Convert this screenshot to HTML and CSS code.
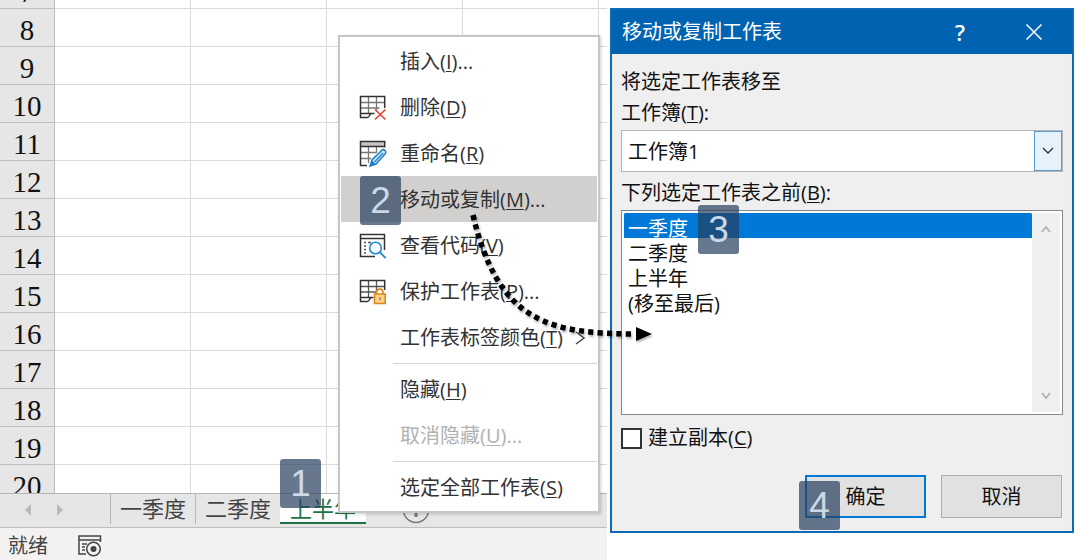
FILE: index.html
```html
<!DOCTYPE html>
<html lang="zh-CN">
<head>
    <meta charset="UTF-8">
    <meta name="viewport" content="width=device-width, initial-scale=1.0">
    <title>移动或复制工作表</title>
    <link rel="stylesheet" href="styles.css">
</head>
<body>
<div class="page">

    <!-- Workbook window -->
    <section class="workbook">
        <div class="sheet">
            <table class="grid">
                <colgroup>
                    <col class="col-head"><col class="col"><col class="col"><col class="col"><col class="col"><col>
                </colgroup>
                <tbody>
                    <tr><th>7</th><td></td><td></td><td></td><td></td><td></td></tr>
                    <tr><th>8</th><td></td><td></td><td></td><td></td><td></td></tr>
                    <tr><th>9</th><td></td><td></td><td></td><td></td><td></td></tr>
                    <tr><th>10</th><td></td><td></td><td></td><td></td><td></td></tr>
                    <tr><th>11</th><td></td><td></td><td></td><td></td><td></td></tr>
                    <tr><th>12</th><td></td><td></td><td></td><td></td><td></td></tr>
                    <tr><th>13</th><td></td><td></td><td></td><td></td><td></td></tr>
                    <tr><th>14</th><td></td><td></td><td></td><td></td><td></td></tr>
                    <tr><th>15</th><td></td><td></td><td></td><td></td><td></td></tr>
                    <tr><th>16</th><td></td><td></td><td></td><td></td><td></td></tr>
                    <tr><th>17</th><td></td><td></td><td></td><td></td><td></td></tr>
                    <tr><th>18</th><td></td><td></td><td></td><td></td><td></td></tr>
                    <tr><th>19</th><td></td><td></td><td></td><td></td><td></td></tr>
                    <tr><th>20</th><td></td><td></td><td></td><td></td><td></td></tr>
                </tbody>
            </table>
        </div>

        <nav class="tab-bar">
            <div class="tab-nav">
                <button type="button" aria-label="上一个"><svg width="8" height="14" viewBox="0 0 8 14"><path d="M7 1v12L1 7z" fill="#b9b9b9"/></svg></button>
                <button type="button" aria-label="下一个"><svg width="8" height="14" viewBox="0 0 8 14"><path d="M1 1v12l6-6z" fill="#b9b9b9"/></svg></button>
            </div>
            <a class="tab" href="#q1">一季度</a>
            <a class="tab" href="#q2">二季度</a>
            <a class="tab active" href="#h1">上半年<span class="badge badge-tab">1</span></a>
            <button class="add-sheet" type="button" aria-label="新工作表">
                <svg width="28" height="28" viewBox="0 0 28 28" fill="none" stroke="#777"><circle cx="14" cy="14" r="12.500" stroke-width="1.500"/><path d="M14 7v14M7 14h14" stroke-width="3"/></svg>
            </button>
        </nav>

        <footer class="status-bar">
            <span>就绪</span>
            <svg width="24" height="22" viewBox="0 0 24 22" fill="none" stroke="#444" stroke-width="1.500">
                <path d="M22.500 7V1H1v18h7M1 5h21M4 9h5M4 12h3M4 15h3"/>
                <circle cx="15.500" cy="14" r="6.800"/>
                <circle cx="15.500" cy="14" r="3" fill="#444" stroke="none"/>
            </svg>
        </footer>

        <!-- Sheet tab context menu -->
        <div class="menu" role="menu">
            <button class="item" role="menuitem" type="button"><span class="icon"></span><span>插入(<u>I</u>)...</span></button>
            <button class="item" role="menuitem" type="button">
                <span class="icon"><svg width="28" height="26" viewBox="0 0 28 26" fill="none">
                    <path d="M1.500 7.500h24M1.500 13h19M9.500 2v17M17.500 2v13" stroke="#777" stroke-width="1.300"/>
                    <path d="M25.700 13V1.500H1.500v21h7c2 0 2-4 4-4h3M1.500 18.500h13" stroke="#333" stroke-width="1.500"/>
                    <path d="M16 14.500l10.500 10M26.500 14.500l-10.500 10" stroke="#e0443a" stroke-width="1.700"/>
                </svg></span><span>删除(<u>D</u>)</span>
            </button>
            <button class="item" role="menuitem" type="button">
                <span class="icon"><svg width="28" height="28" viewBox="0 0 28 28" fill="none">
                    <path d="M2 2h23v4H2z" fill="#c8c6c4"/>
                    <path d="M2 12.500h15M2 18.500h10M9.500 7v16M17.500 7v6" stroke="#777" stroke-width="1.300"/>
                    <path d="M25.700 7.500V1.500H1.500v24H8M1.500 6.500h24" stroke="#333" stroke-width="1.500"/>
                    <path d="M11 26l2-6L22.500 10.500c1-1 2.500-1 3.500 0s1 2.500 0 3.500L17 24z" fill="#cfe6f8" stroke="#1e7fc9" stroke-width="1.500"/>
                    <path d="M11 26l2-5.500 3.500 3.500z" fill="#1e7fc9"/>
                    <path d="M15.500 22L24 13" stroke="#1e7fc9" stroke-width="1.200"/>
                </svg></span><span>重命名(<u>R</u>)</span>
            </button>
            <button class="item selected" role="menuitem" type="button"><span class="icon"></span><span>移动或复制(<u>M</u>)...</span><span class="badge badge-item">2</span></button>
            <button class="item" role="menuitem" type="button">
                <span class="icon"><svg width="28" height="26" viewBox="0 0 28 26" fill="none">
                    <path d="M16 23.500H1.500v-22h24V17M1.500 5.500h24" stroke="#333" stroke-width="1.500"/>
                    <path d="M5 9.500h2M9 9.500h3M5 13h2M5 16.500h2M5 20h2" stroke="#555" stroke-width="1.400"/>
                    <circle cx="16.500" cy="15" r="5.800" fill="#fff" stroke="#1e88d2" stroke-width="1.600"/>
                    <path d="M20.700 19.200l6 6" stroke="#1e88d2" stroke-width="1.800"/>
                </svg></span><span>查看代码(<u>V</u>)</span>
            </button>
            <button class="item" role="menuitem" type="button">
                <span class="icon"><svg width="28" height="26" viewBox="0 0 28 26" fill="none">
                    <path d="M1.500 7.500h24M1.500 13h16M9.500 2v17M17.500 2v10" stroke="#555" stroke-width="1.300"/>
                    <path d="M25.700 11V1.500H1.500v21h7c2 0 2-4 4-4h2M1.500 18.500h12" stroke="#333" stroke-width="1.500"/>
                    <path d="M17.500 15v-1.500c0-4.500 6.500-4.500 6.500 0V15" stroke="#d9851a" stroke-width="1.600"/>
                    <path d="M15.500 15h10.700v9.500H15.500z" fill="#fbd28b" stroke="#d9851a" stroke-width="1.500"/>
                    <path d="M20.800 18.500v2.500" stroke="#b86a10" stroke-width="1.400"/>
                </svg></span><span>保护工作表(<u>P</u>)...</span>
            </button>
            <button class="item" role="menuitem" type="button"><span class="icon"></span><span>工作表标签颜色(<u>T</u>)</span>
                <svg class="submenu" width="10" height="14" viewBox="0 0 10 14" fill="none"><path d="M1 1l8 6-8 6" stroke="#444" stroke-width="1.500"/></svg>
            </button>
            <hr>
            <button class="item" role="menuitem" type="button"><span class="icon"></span><span>隐藏(<u>H</u>)</span></button>
            <button class="item" role="menuitem" type="button" disabled><span class="icon"></span><span>取消隐藏(<u>U</u>)...</span></button>
            <hr>
            <button class="item" role="menuitem" type="button"><span class="icon"></span><span>选定全部工作表(<u>S</u>)</span></button>
        </div>
    </section>

    <!-- Move or copy dialog -->
    <section class="dialog-area">
        <form class="dialog">
            <header class="title-bar">
                <h1>移动或复制工作表</h1>
                <button class="help" type="button">?</button>
                <button type="button" aria-label="关闭"><svg width="18" height="18" viewBox="0 0 18 18"><path d="M1.500 1.500l15 15M16.500 1.500l-15 15" stroke="#fff" stroke-width="1.500"/></svg></button>
            </header>
            <div class="dialog-body">
                <p>将选定工作表移至</p>
                <label for="book">工作簿(<u>T</u>):</label>
                <div class="combo">
                    <select id="book"><option>工作簿1</option></select>
                    <span class="combo-arrow"><svg width="12" height="8" viewBox="0 0 12 8" fill="none"><path d="M1 1l5 5 5-5" stroke="#333" stroke-width="1.400"/></svg></span>
                </div>
                <label for="before">下列选定工作表之前(<u>B</u>):</label>
                <div class="list">
                    <select id="before" size="8">
                        <option selected>一季度</option>
                        <option>二季度</option>
                        <option>上半年</option>
                        <option>(移至最后)</option>
                    </select>
                    <div class="scrollbar">
                        <svg width="10" height="8" viewBox="0 0 10 8" fill="none"><path d="M1 7l4-5 4 5" stroke="#b5b5b5" stroke-width="2"/></svg>
                        <svg width="10" height="8" viewBox="0 0 10 8" fill="none"><path d="M1 1l4 5 4-5" stroke="#b5b5b5" stroke-width="2"/></svg>
                    </div>
                    <span class="badge badge-list">3</span>
                </div>
                <div class="check">
                    <input type="checkbox" id="copy">
                    <label for="copy">建立副本(<u>C</u>)</label>
                </div>
                <div class="actions">
                    <button class="btn primary" type="button">确定<span class="badge badge-ok">4</span></button>
                    <button class="btn" type="button">取消</button>
                </div>
            </div>
        </form>
    </section>

    <!-- Dotted arrow from the menu item to the dialog -->
    <svg class="arrow" width="200" height="150" viewBox="0 0 200 150" fill="none">
        <path d="M13 15C24 62 42 98 72 115C98 131 135 134 175 134" stroke="#000" stroke-width="5.500" stroke-dasharray="5.200 4.200"/>
        <path d="M176 127l16 7-16 7z" fill="#000"/>
    </svg>
</div>
</body>
</html>
```
FILE: styles.css
```css
* {
    box-sizing: border-box;
}
body {
    margin: 0;
    background-color: #fff;
    color: #1a1a1a;
    font-family: "Open Sans", "Noto Sans CJK SC", sans-serif;
    font-size: 20px;
    line-height: 26px;
}
button, select, input {
    font: inherit;
    color: inherit;
    margin: 0;
}
button {
    background: none;
    border: 0;
    padding: 0;
}
svg {
    display: block;
    flex: none;
}
u {
    text-underline-offset: 2px;
    text-decoration-thickness: 1px;
}
.page {
    position: relative;
    display: grid;
    grid-template-columns: 607fr 473fr;
    height: 100vh;
}

/* Workbook */
.workbook {
    position: relative;
    display: flex;
    flex-direction: column;
    min-height: 0;
}
.sheet {
    flex: 1;
    min-height: 0;
    overflow: hidden;
}
.grid {
    width: 100%;
    margin-top: -29px; /* scrolled part way into row 7 */
    table-layout: fixed;
    border-collapse: separate;
    border-spacing: 0;
}
.col-head { width: 55px; }
.col { width: 136px; }
.grid th, .grid td {
    height: 38px;
    padding: 0;
    border-right: 1px solid #dadada;
    border-bottom: 1px solid #dadada;
}
.grid th {
    padding-top: 5px;
    background-color: #e6e6e6;
    border-color: #bdbdbd;
    color: #111;
    font-family: "Liberation Serif", serif;
    font-size: 29px;
    font-weight: normal;
    line-height: 32px;
}
.grid td:last-child { border-right: 0; }

.tab-bar {
    display: flex;
    align-items: flex-start;
    height: 35px;
    background-color: #e6e6e6;
    border-top: 1px solid #b5b5b5;
    border-bottom: 1px solid #bdbdbd;
}
.tab-nav {
    display: flex;
    gap: 24px;
    width: 110px;
    padding: 9px 0 0 24px;
}
.tab {
    position: relative;
    height: 30px;
    padding: 0 9px;
    border-left: 1px solid #b5b5b5;
    color: #444;
    font-size: 22px;
    line-height: 28px;
    text-decoration: none;
}
.tab.active {
    padding: 0 10px;
    background-color: #fff;
    border-left: 0;
    border-bottom: 2px solid #217346;
    color: #217346;
}
.add-sheet {
    margin: 2px 0 0 36px;
}
.status-bar {
    display: flex;
    align-items: center;
    gap: 30px;
    height: 32px;
    padding: 3px 8px 0;
    background-color: #f3f2f1;
    color: #444;
}

/* Context menu */
.menu {
    position: absolute;
    top: 35px;
    left: 338px;
    z-index: 1;
    width: 262px;
    padding: 1px;
    background-color: #fff;
    border: 2px solid #c6c6c6;
    box-shadow: 1px 1px 3px rgba(0,0,0,0.2);
    color: #333;
}
.item {
    position: relative;
    display: flex;
    align-items: center;
    width: 100%;
    height: 46px;
    padding: 2px 12px 0 18px;
    text-align: left;
    white-space: nowrap;
}
.item.selected { background-color: #d2d0ce; }
.item:disabled { color: #b1b1b1; }
.icon {
    width: 41px;
}
.submenu { margin-left: auto; }
.menu hr {
    height: 6px;
    margin: 0 0 0 52px;
    border: 0;
    background: linear-gradient(#d4d4d4, #d4d4d4) center / 100% 1px no-repeat;
}

/* Dialog */
.dialog-area {
    padding: 8px 6px 27px 3px;
}
.dialog {
    height: 100%;
    background-color: #f0eff0;
    border: 2px solid #0f6ab8;
    color: #111;
}
.title-bar {
    display: flex;
    align-items: center;
    gap: 60px;
    height: 44px;
    padding: 0 29px 0 10px;
    background-color: #0063b1;
    color: #fff;
}
.title-bar h1 {
    flex: 1;
    margin: 0;
    font-size: 20px;
    font-weight: normal;
}
.help {
    font-size: 22px;
    font-weight: 600;
}
.dialog-body {
    display: flex;
    flex-direction: column;
    padding: 15px 9px 0;
}
.dialog-body p {
    margin: 0 0 5px;
}
.combo {
    display: flex;
    height: 42px;
    margin: 4px 0 8px;
    background-color: #fff;
    border: 1px solid #b5b5b5;
}
.combo select {
    flex: 1;
    padding: 2px 6px 0;
    background: none;
    border: 0;
    appearance: none;
}
.combo-arrow {
    display: grid;
    place-items: center;
    width: 28px;
    background-color: #e5f1fb;
    border: 1px solid #5a9bd0;
}
.list {
    position: relative;
    display: flex;
    height: 205px;
    margin: 4px 0 10px;
    padding: 2px;
    background-color: #fff;
    border: 1px solid #828790;
}
.list select {
    flex: 1;
    padding: 0;
    background: none;
    border: 0;
    outline: 0;
    overflow: hidden;
    appearance: none;
}
.list option {
    height: 25px;
    min-height: 25px;
    padding: 0 4px;
    line-height: 23px;
}
.list option:checked {
    background: #0078d7 linear-gradient(#0078d7, #0078d7);
    color: #fff;
}
.scrollbar {
    display: flex;
    flex-direction: column;
    align-items: center;
    justify-content: space-between;
    width: 28px;
    padding: 12px 0;
    background-color: #f0f0f0;
}
.check {
    display: flex;
    align-items: center;
    gap: 6px;
}
.check input {
    width: 21px;
    height: 21px;
    background-color: #fff;
    border: 2px solid #333;
    appearance: none;
}
.actions {
    display: flex;
    justify-content: flex-end;
    gap: 15px;
    margin-top: 24px;
    padding-right: 1px;
}
.btn {
    position: relative;
    width: 121px;
    height: 43px;
    background-color: #e1e1e1;
    border: 1px solid #adadad;
}
.btn.primary { border: 2px solid #0078d7; }

/* Step badges */
.badge {
    position: absolute;
    width: 41px;
    height: 49px;
    background-color: rgba(38,62,94,0.7);
    border-radius: 3px;
    color: #cbd8e6;
    font-family: "Liberation Sans", sans-serif;
    font-size: 37px;
    line-height: 49px;
    text-align: center;
}
.badge-tab { top: -35px; left: 0; }
.badge-item { top: 0; left: 19px; }
.badge-list { top: -6px; left: 76px; }
.badge-ok { top: 4px; left: -8px; }

.arrow {
    position: absolute;
    top: 200px;
    left: 460px;
    z-index: 2;
    filter: drop-shadow(1px 2px 1px rgba(0,0,0,0.3));
}
```
